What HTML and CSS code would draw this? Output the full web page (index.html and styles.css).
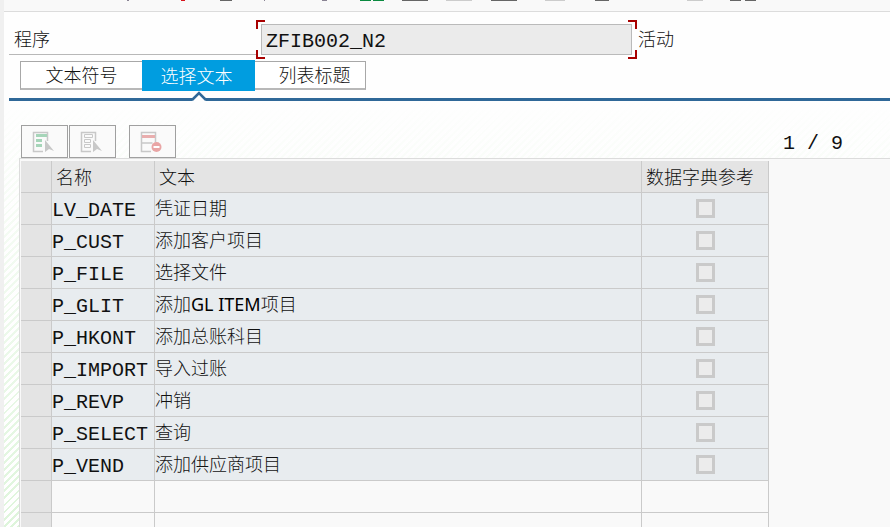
FILE: index.html
```html
<!DOCTYPE html>
<html lang="zh-CN">
<head>
    <meta charset="UTF-8">
    <meta name="viewport" content="width=device-width, initial-scale=1.0">
    <title>ZFIB002_N2</title>
    <link rel="stylesheet" href="styles.css">
</head>
<body>
    <header class="toolbar">
        <svg width="760" height="1" viewBox="0 0 760 1" shape-rendering="crispEdges" aria-hidden="true">
            <path fill="#8a8494" d="M127 0h2v1h-2zM264 0h1v1h-1zM322 0h5v1h-5z"/>
            <path fill="#d8141c" d="M181 0h4v1h-4z"/>
            <path fill="#666" d="M220 0h12v1h-12zM402 0h26v1h-26zM491 0h26v1h-26zM595 0h14v1h-14zM730 0h11v1h-11zM745 0h11v1h-11z"/>
            <path fill="#0a8a40" d="M360 0h11v1h-11zM373 0h11v1h-11z"/>
            <path fill="#ccc" d="M446 0h26v1h-26zM545 0h20v1h-20zM687 0h16v1h-16z"/>
        </svg>
    </header>

    <main class="screen">
        <!-- Program name -->
        <div class="program-row">
            <label class="program-label" for="program">程序</label>
            <div class="focus-frame">
                <input class="program-input" id="program" type="text" value="ZFIB002_N2" readonly>
            </div>
            <span class="program-status">活动</span>
        </div>

        <!-- Tabs -->
        <nav class="tabs">
            <button class="tab tab-first" type="button">文本符号</button>
            <button class="tab tab-active" type="button">选择文本
                <svg class="tab-notch" width="16" height="10" viewBox="0 0 16 10" aria-hidden="true">
                    <path fill="#fefefe" d="M1 10L8 3l7 7z"/>
                    <path fill="none" stroke="#2f6898" stroke-width="2.500" d="M1 9L8 2l7 7"/>
                </svg>
            </button>
            <button class="tab tab-last" type="button">列表标题</button>
        </nav>

        <section class="panel">
            <div class="actions">
                <button class="action" type="button" aria-label="全选">
                    <svg width="22" height="22" viewBox="0 0 22 22" aria-hidden="true">
                        <path fill="none" stroke="#c8c8c8" stroke-width="1.5" d="M11 20.5H1.5v-19h14V10"/>
                        <path fill="#a6d5b9" d="M4 3h11v3H4zM4 8h6v3H4zM4 13h6v3H4z"/>
                        <path fill="#c8c8c8" d="M13 9l9 11-5-2-4 3z"/>
                    </svg>
                </button>
                <button class="action" type="button" aria-label="取消全选">
                    <svg width="22" height="22" viewBox="0 0 22 22" aria-hidden="true">
                        <path fill="none" stroke="#c8c8c8" stroke-width="1.5" d="M11 20.5H1.5v-19h14V10"/>
                        <path fill="none" stroke="#c8c8c8" d="M4.500 3.500h8v3h-8zM4.500 8.500h6v3h-6zM4.500 13.500h6v3h-6z"/>
                        <path fill="#c8c8c8" d="M13 9l9 11-5-2-4 3z"/>
                    </svg>
                </button>
                <button class="action action-delete" type="button" aria-label="删除行">
                    <svg width="22" height="22" viewBox="0 0 22 22" aria-hidden="true">
                        <path fill="none" stroke="#c8c8c8" stroke-width="1.5" d="M11 20.5H1.5v-19h14V11M1.500 12h11"/>
                        <path fill="#e9aeae" d="M2 4h13v3H2z"/>
                        <circle cx="16.500" cy="16" r="5" fill="#e9a5a5"/>
                        <path fill="#fff" d="M13.500 15h6v2h-6z"/>
                    </svg>
                </button>
                <span class="counter">1 / 9</span>
            </div>

            <!-- Selection texts -->
            <div class="grid">
                <table class="texts">
                    <colgroup>
                        <col class="col-mark">
                        <col class="col-name">
                        <col class="col-text">
                        <col class="col-dict">
                    </colgroup>
                    <thead>
                        <tr><th></th><th>名称</th><th>文本</th><th>数据字典参考</th></tr>
                    </thead>
                    <tbody>
                        <tr><th></th><td class="name">LV_DATE</td><td>凭证日期</td><td class="dict"><input type="checkbox" aria-label="LV_DATE 数据字典参考" disabled></td></tr>
                        <tr><th></th><td class="name">P_CUST</td><td>添加客户项目</td><td class="dict"><input type="checkbox" aria-label="P_CUST 数据字典参考" disabled></td></tr>
                        <tr><th></th><td class="name">P_FILE</td><td>选择文件</td><td class="dict"><input type="checkbox" aria-label="P_FILE 数据字典参考" disabled></td></tr>
                        <tr><th></th><td class="name">P_GLIT</td><td>添加<span class="latin">GL ITEM</span>项目</td><td class="dict"><input type="checkbox" aria-label="P_GLIT 数据字典参考" disabled></td></tr>
                        <tr><th></th><td class="name">P_HKONT</td><td>添加总账科目</td><td class="dict"><input type="checkbox" aria-label="P_HKONT 数据字典参考" disabled></td></tr>
                        <tr><th></th><td class="name">P_IMPORT</td><td>导入过账</td><td class="dict"><input type="checkbox" aria-label="P_IMPORT 数据字典参考" disabled></td></tr>
                        <tr><th></th><td class="name">P_REVP</td><td>冲销</td><td class="dict"><input type="checkbox" aria-label="P_REVP 数据字典参考" disabled></td></tr>
                        <tr><th></th><td class="name">P_SELECT</td><td>查询</td><td class="dict"><input type="checkbox" aria-label="P_SELECT 数据字典参考" disabled></td></tr>
                        <tr><th></th><td class="name">P_VEND</td><td>添加供应商项目</td><td class="dict"><input type="checkbox" aria-label="P_VEND 数据字典参考" disabled></td></tr>
                        <tr class="empty"><th></th><td></td><td></td><td></td></tr>
                        <tr class="empty"><th></th><td></td><td></td><td></td></tr>
                    </tbody>
                </table>
            </div>
        </section>
    </main>
</body>
</html>
```

FILE: styles.css
```css
:root {
    --blue: #009de0;
    --dark-blue: #2f6898;
    --line: #cacaca;
    --frame: #dcdcdc;
    --focus: #a80000;
    --surface: #f9f9f9;
}

* {
    margin: 0;
    padding: 0;
    box-sizing: border-box;
}

body {
    display: flex;
    flex-direction: column;
    height: 100vh;
    overflow: hidden;
    padding-left: 4px;
    background: #f0f0f0;
    color: #111;
    font-family: "Liberation Sans", "Noto Sans CJK SC", sans-serif;
    font-size: 18px;
    font-weight: 300;
    line-height: 24px;
}

button,
input {
    font: inherit;
    color: inherit;
}

.toolbar {
    flex: none;
    height: 12px;
    background: var(--surface);
    border-bottom: 1px solid var(--frame);
    overflow: hidden;
}

.toolbar svg {
    display: block;
    margin-left: -4px;
}

.screen {
    flex: 1;
    display: flex;
    flex-direction: column;
    min-height: 0;
    padding-top: 8px;
    background: #fefefe;
}

/* Program row */
.program-row {
    flex: none;
    display: flex;
    align-items: flex-start;
    padding-left: 5px;
}

.program-label {
    width: 247px;
    height: 35px;
    padding: 8px 0 0 5px;
    border-bottom: 1px solid #b8b8b8;
}

/* Red corner marks around the focused field */
.focus-frame {
    --mark: linear-gradient(var(--focus), var(--focus)) no-repeat;
    width: 381px;
    padding: 4px 5px;
    background:
        var(--mark) 0 0 / 9px 2px,
        var(--mark) 0 0 / 2px 9px,
        var(--mark) 100% 0 / 9px 2px,
        var(--mark) 100% 0 / 2px 9px,
        var(--mark) 0 100% / 9px 2px,
        var(--mark) 0 100% / 2px 9px,
        var(--mark) 100% 100% / 9px 2px,
        var(--mark) 100% 100% / 2px 9px;
}

.program-input {
    display: block;
    width: 100%;
    height: 31px;
    padding: 3px 4px 0;
    border: 1px solid #bababa;
    background: #ebebeb;
    font-family: "Liberation Mono", monospace;
    font-size: 20px;
    outline: none;
}

.program-status {
    padding: 8px 0 0 1px;
}

/* Tabs */
.tabs {
    flex: none;
    display: flex;
    align-items: center;
    height: 42px;
    margin-left: 5px;
    padding: 1px 0 7px 11px;
    border-bottom: 3px solid var(--dark-blue);
}

.tab {
    height: 29px;
    padding-top: 2px;
    border: 1px solid #a8a8a8;
    border-bottom: 2px solid #b8b8b8;
    background: #fff;
    line-height: 24px;
}

.tab-first {
    width: 122px;
    border-right: 0;
}

.tab-active {
    position: relative;
    width: 113px;
    height: 31px;
    padding-right: 4px;
    border: 0;
    background: var(--blue);
    color: #fff;
}

.tab-last {
    width: 111px;
    padding-left: 9px;
    border-left: 0;
}

/* Peak in the blue rule under the active tab */
.tab-notch {
    position: absolute;
    left: 50%;
    bottom: -10px;
    margin-left: -8px;
}

/* Panel */
.panel {
    flex: 1;
    display: flex;
    flex-direction: column;
    min-height: 0;
    padding-top: 24px;
    background:
        linear-gradient(rgba(254, 254, 254, 1), rgba(254, 254, 254, 0)),
        repeating-linear-gradient(135deg, #def5db 0 2px, #fff 2px 5px);
}

.actions {
    flex: none;
    display: flex;
    gap: 1px;
    padding-left: 17px;
}

.action {
    display: flex;
    align-items: center;
    justify-content: center;
    width: 47px;
    height: 33px;
    padding-right: 3px;
    border: 1px solid #a0a0a0;
    background: #fafafa;
}

.action-delete {
    margin-left: 12px;
}

.counter {
    margin-left: 606px;
    padding-top: 7px;
    font-family: "Liberation Mono", monospace;
    font-size: 20px;
    white-space: nowrap;
}

.grid {
    flex: 1;
    min-height: 0;
    margin-left: 15px;
    padding: 2px 0 0 1px;
    border-top: 1px solid var(--frame);
    border-left: 1px solid var(--frame);
    background: var(--surface);
    overflow: hidden;
}

.texts {
    table-layout: fixed;
    width: 748px;
    border-spacing: 0;
}

.col-mark { width: 31px; }
.col-name { width: 103px; }
.col-text { width: 487px; }
.col-dict { width: 127px; }

.texts th,
.texts td {
    height: 32px;
    border-right: 1px solid var(--line);
    border-bottom: 1px solid var(--line);
    background: #e8ecef;
    font-weight: 300;
    text-align: left;
    white-space: nowrap;
}

.texts th {
    padding: 2px 0 0 4px;
    background: #e4e4e4;
}

.texts .empty td {
    background: var(--surface);
}

.texts .name {
    padding-top: 4px;
    font-family: "Liberation Mono", monospace;
    font-size: 20px;
}

.latin {
    font-family: "Noto Sans", sans-serif;
    font-weight: 400;
    color: #000;
}

.texts .dict {
    text-align: center;
}

.dict input {
    appearance: none;
    display: block;
    width: 19px;
    height: 19px;
    margin: 0 auto;
    border: 3px solid #cacaca;
    background: #ececec;
}
```
